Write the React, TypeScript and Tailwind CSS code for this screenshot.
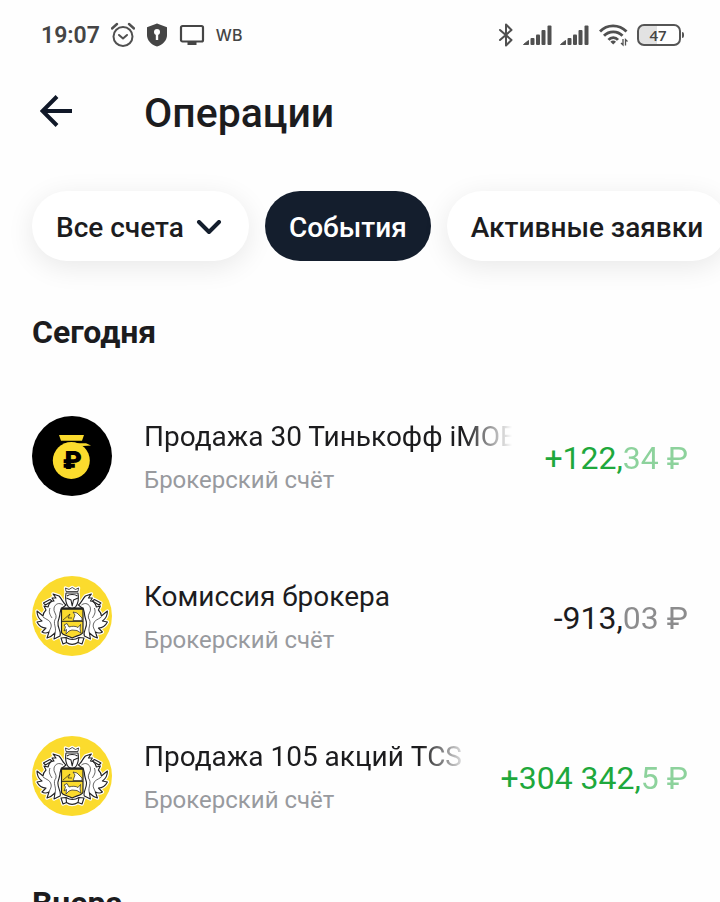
import React, { useState } from 'react';

interface Operation {
  id: number;
  title: string;
  account: string;
  whole: string;
  fraction: string;
  income: boolean;
  logo: 'fund' | 'bank';
  faded: boolean;
}

const operations: Operation[] = [
  { id: 1, title: 'Продажа 30 Тинькофф iMOE', account: 'Брокерский счёт', whole: '+122,', fraction: '34 ₽', income: true, logo: 'fund', faded: true },
  { id: 2, title: 'Комиссия брокера', account: 'Брокерский счёт', whole: '-913,', fraction: '03 ₽', income: false, logo: 'bank', faded: false },
  { id: 3, title: 'Продажа 105 акций TCS', account: 'Брокерский счёт', whole: '+304 342,', fraction: '5 ₽', income: true, logo: 'bank', faded: true },
];

const SignalIcon: React.FC = () => (
  <svg width="29" height="22" viewBox="0 0 29 22" fill="#505050" aria-hidden="true">
    <path d="M0.500 20.500 L5.500 16.500 V20.500 Z" stroke="#505050" strokeLinejoin="round" />
    <rect x="7.500" y="14" width="4" height="7" rx="1" />
    <rect x="13" y="10.500" width="4" height="10.500" rx="1" />
    <rect x="18.500" y="6" width="4" height="15" rx="1" />
    <rect x="24.500" y="1.500" width="4" height="19.500" rx="1" />
  </svg>
);

const StatusBar: React.FC = () => (
  <div className="flex h-[70px] items-center justify-between pl-[41px] pr-9 text-[#454545]">
    <div className="flex items-center gap-[11px]">
      <span className="pt-0.5 text-[23px] font-semibold">19:07</span>
      <svg width="24" height="26" viewBox="0 0 24 26" fill="none" stroke="#505050" strokeWidth="2" strokeLinecap="round" strokeLinejoin="round" aria-hidden="true">
        <circle cx="12" cy="14.500" r="9.500" />
        <path d="M1 6.500 L6 2 M23 6.500 L18 2" strokeWidth="2.400" />
        <path d="M8 13 L12 16.500 L16 13" />
      </svg>
      <svg width="22" height="24" viewBox="0 0 22 24" aria-hidden="true">
        <path d="M11 0.500 L21 4.200 V12 C21 17.500 17 21.500 11 23.500 C5 21.500 1 17.500 1 12 V4.200 Z" fill="#454545" />
        <circle cx="11" cy="9" r="3" fill="#fff" />
        <path d="M11 10 V17" stroke="#fff" strokeWidth="2.400" />
      </svg>
      <svg width="26" height="22" viewBox="0 0 26 22" aria-hidden="true">
        <rect x="2" y="2" width="22" height="15.500" rx="1.500" fill="none" stroke="#454545" strokeWidth="2.200" />
        <rect x="8.500" y="18" width="9" height="3" fill="#454545" />
      </svg>
      <span className="font-['Inter'] text-base font-medium">WB</span>
    </div>
    <div className="flex items-center gap-2">
      <svg className="mr-px" width="16" height="24" viewBox="0 0 16 24" fill="none" stroke="#505050" strokeWidth="2" strokeLinejoin="round" strokeLinecap="round" aria-hidden="true">
        <path d="M2 7 L13.500 17 L8 22.500 V1.500 L13.500 7 L2 17" />
      </svg>
      <SignalIcon />
      <SignalIcon />
      <svg className="ml-0.5" width="30" height="24" viewBox="0 0 30 24" fill="none" stroke="#505050" strokeWidth="2.800" aria-hidden="true">
        <path d="M1 8.500 C8 1 20 1 27.500 8.500" />
        <path d="M5 12.800 C10 7.500 18.500 7.500 23.500 12.800" />
        <path d="M9.500 16.800 C12 13.800 16.500 13.800 19 16.800" />
        <path d="M14.200 21.500 L11.400 18.700 C13 17.200 15.400 17.200 17 18.700 Z" fill="#505050" stroke="none" />
        <path d="M24 16 V22 L22 20 M26.500 22.500 V16.500 L28.500 18.500" strokeWidth="1.300" />
      </svg>
      <div className="flex items-center gap-px">
        <div className="flex h-[22px] w-11 items-center justify-center rounded-[7px] border-2 border-[#555555] bg-linear-to-r from-[#e2e2e2] from-45% to-white to-45% pr-0.5 font-['Open_Sans'] text-[15px] font-semibold">
          47
        </div>
        <div className="h-1.5 w-0.5 rounded-r bg-[#555555]" />
      </div>
    </div>
  </div>
);

const FundLogo: React.FC = () => (
  <svg className="size-20 shrink-0" viewBox="0 0 80 80" aria-hidden="true">
    <circle cx="40" cy="40" r="40" fill="#000" />
    <g fill="#fbdb2d">
      <path d="M27 19 H52 L50 24.700 H29 Z" />
      <path d="M30 27.200 H54 L59 29.600 L51 30 Z" />
      <circle cx="39.300" cy="44.500" r="18.500" />
    </g>
    <text x="40" y="53" textAnchor="middle" fontFamily="Inter, sans-serif" fontWeight="900" fontSize="25" fill="#000">₽</text>
  </svg>
);

const leaf =
  'M34 29 C31 27 30 23 27 20 L21 18 L24 22 L20 22 L22 25 C19 25 17 27 16 31 L12 30 L14 34 C12 36 11 38 11 40 L5 35 C5 40 7 43 10 45 L5 46 C7 50 10 52 14 52 L10 56 C13 58 15 57 17 56 L15 62 C19 61 21 59 23 57 L22 63 L28 60 C30 56 25 52 26 46 C27 42 28 40 28 37 L29 33 Z';
const veins = 'M31 29 C27 26 23 28 22 32 C21 36 25 38 24 42 M11 41 C15 44 18 44 19 48 C20 51 18 53 17 56 M24 42 C20 47 25 51 23 57 M18 32 C16 37 19 40 20 42';
const horn = 'M11.500 27 L18 23.500 L20 25 L13.500 29 Z';
const helmet = 'M34 17 L46 17 C47 23 46 28 43.500 31 L40 33 L36.500 31 C34 28 33 23 34 17 Z';
const crown = 'M34 15.500 L33.500 12 L37 13.500 L40.200 11.500 L43.500 13.500 L46.500 12 L46 15.500 Z';
const shield = 'M29.500 32 H51 V56 C51 59 45 59.500 40.200 62 C35 59.500 29.500 59 29.500 56 Z';
const ribbon = 'M29 62 L34 61.500 C38 64 43 64 47 61.500 L52 62 L50 68 L46 66.500 C42 69 38 69 34.500 66.500 L31 68 Z';

const BankLogo: React.FC = () => (
  <svg className="size-20 shrink-0" viewBox="0 0 80 80" aria-hidden="true">
    <circle cx="40" cy="40" r="40" fill="#fbdb2d" />
    <g fill="#fff" stroke="#fff" strokeWidth="3.500" strokeLinejoin="round">
      <path d={leaf} />
      <path d={horn} />
      <path d={leaf} transform="translate(80.400 0) scale(-1 1)" />
      <path d={horn} transform="translate(80.400 0) scale(-1 1)" />
      <path d={helmet} />
      <path d={crown} />
      <path d={shield} />
      <path d={ribbon} />
    </g>
    <g fill="#fff" stroke="#222" strokeWidth="1.100" strokeLinejoin="round">
      <path d={leaf} />
      <path d={veins} fill="none" strokeWidth="0.700" />
      <path d={horn} />
      <g transform="translate(80.400 0) scale(-1 1)">
        <path d={leaf} />
        <path d={veins} fill="none" strokeWidth="0.700" />
        <path d={horn} />
      </g>
      <path d={helmet} />
      <path d="M35 20 C37 18 43 18 45.500 20 M34.500 22 L39 24 L40.200 30 L41.500 24 L46 22" fill="none" />
      <path d={crown} strokeWidth="0.800" />
      <path d={ribbon} />
      <path d="M34 61.500 L34.500 66.500 M47 61.500 L46 66.500" />
    </g>
    <path d={shield} fill="#fbdb2d" stroke="#222" strokeWidth="1.200" />
    <path d="M29.500 32.800 H51" stroke="#222" strokeWidth="2" />
    <path d="M30 45.300 H51" stroke="#222" strokeWidth="1" />
    <g fill="#fff" stroke="#222" strokeWidth="0.700" strokeLinejoin="round">
      <path d="M41 44.500 L43 39 L41 36 L45 37 L50 42 V44.500 Z" />
      <path d="M31 44 L38 38 L36 42 L40 42" fill="none" />
      <path d="M32 49 L35 47.500 L37 51 C40 50 44 50 46 51.500 L48.500 48.500 L48 53 L49 57 L45 54.500 L40 54 L37 55 L34 58 L34.500 53.500 L32 55 L33.500 51 Z" />
    </g>
  </svg>
);

const OperationRow: React.FC<{ operation: Operation }> = ({ operation }) => (
  <li className="flex h-40 items-center">
    {operation.logo === 'fund' ? <FundLogo /> : <BankLogo />}
    <div className="mx-8 min-w-0 flex-1 pt-[5px]">
      <h3 className={operation.faded
        ? 'overflow-hidden whitespace-nowrap text-[28px] leading-10 mask-r-from-[calc(100%-48px)]'
        : 'overflow-hidden whitespace-nowrap text-[28px] leading-10'}
      >
        {operation.title}
      </h3>
      <p className="mt-[3px] text-2xl leading-10 text-[#989a9e]">{operation.account}</p>
    </div>
    <p className={operation.income ? 'whitespace-nowrap pt-1 text-[32px] text-[#1ea83c]' : 'whitespace-nowrap pt-1 text-[32px] text-[#1c1c1e]'}>
      {operation.whole}
      <span className="opacity-50">{operation.fraction}</span>
    </p>
  </li>
);

const App: React.FC = () => {
  const [tab, setTab] = useState('events');

  const active = 'h-[70px] shrink-0 rounded-full bg-[#141e2d] px-6 pt-1 text-[28px] font-medium text-white';
  const inactive = 'h-[70px] shrink-0 rounded-full bg-white px-6 pt-1 text-[28px] font-medium shadow-[0_6px_28px_rgba(0,0,0,0.09)]';

  return (
    <div className="h-screen overflow-hidden bg-[#fefefe] font-['Roboto','Noto_Sans',sans-serif] text-[#1c1c1e]">
      <StatusBar />
      <header className="flex h-[86px] items-center px-10">
        <button type="button" aria-label="Назад" className="mr-[72px] pb-1">
          <svg width="32" height="32" viewBox="0 0 32 32" fill="none" stroke="#101828" strokeWidth="4" aria-hidden="true">
            <path d="M32 16 H3 M17 1.500 L2.500 16 L17 30.500" />
          </svg>
        </button>
        <h1 className="pt-0.5 text-[41px] font-medium">Операции</h1>
      </header>

      <nav className="flex gap-4 overflow-hidden pb-10 pl-8 pt-[35px] whitespace-nowrap">
        <button type="button" className={inactive}>
          <span className="flex items-center gap-3">
            Все счета
            <svg width="29" height="16" viewBox="0 0 29 16" fill="none" stroke="#141e2d" strokeWidth="4" strokeLinecap="round" strokeLinejoin="round" aria-hidden="true">
              <path d="M3 2 L13 12 L23 2" />
            </svg>
          </span>
        </button>
        <button type="button" className={tab === 'events' ? active : inactive} onClick={() => setTab('events')}>
          События
        </button>
        <button type="button" className={tab === 'orders' ? active : inactive} onClick={() => setTab('orders')}>
          Активные заявки
        </button>
      </nav>

      <main className="px-8">
        <section>
          <h2 className="pt-1.5 text-[32px] leading-[50px] font-bold">Сегодня</h2>
          <ul className="pt-[19px]">
            {operations.map(operation => (
              <OperationRow key={operation.id} operation={operation} />
            ))}
          </ul>
        </section>
        <section>
          <h2 className="pt-[22px] text-[32px] leading-[50px] font-bold">Вчера</h2>
        </section>
      </main>
    </div>
  );
};

export default App;
